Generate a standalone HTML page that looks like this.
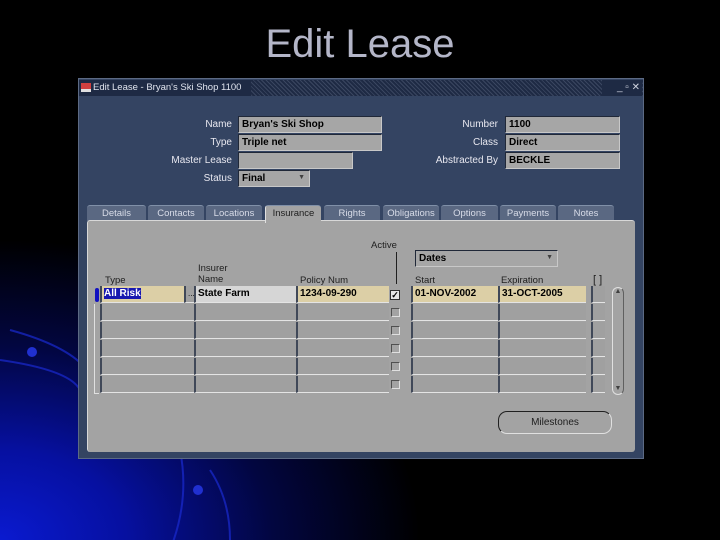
<!DOCTYPE html>
<html><head><meta charset="utf-8"><style>
*{margin:0;padding:0;box-sizing:border-box}
body{width:720px;height:540px;overflow:hidden;position:relative;font-family:"Liberation Sans",sans-serif;
background:radial-gradient(ellipse 420px 300px at 0px 540px,#0a1ad0 0%,#0610a0 30%,#020640 65%,#000 100%),#000;}
.a{position:absolute}
.t{font-size:10px;color:#101010;white-space:nowrap}
.lb{position:absolute;font-size:10px;color:#e8e8f0;text-align:right;white-space:nowrap}
.f{position:absolute;height:17px;background:#a6a6a6;border:1px solid #c8c8c8;border-left-color:#202838;border-top-color:#202838;font-size:10px;font-weight:bold;color:#000;padding:1px 3px;line-height:14px}
.tab{position:absolute;top:205px;height:16px;background:#5a6882;color:#d8dce8;font-size:9.5px;text-align:center;line-height:16px;border-top:1px solid #8090a8;border-radius:3px 3px 0 0}
.c{position:absolute;height:17px;background:#a0a0a0;border-left:2px solid #404858;border-bottom:1px solid #e4e4e4;font-size:10px;font-weight:bold;padding:1px 2px;line-height:14px}
.cb{position:absolute;width:9px;height:9px;border:1px solid #505050;border-right-color:#e0e0e0;border-bottom-color:#e0e0e0;left:391px}
.h{position:absolute;font-size:9.5px;color:#202020;white-space:nowrap}
</style></head><body>
<div class="a" style="left:0;top:22px;width:720px;text-align:center;font-size:40px;color:#b4b6c8">Edit Lease</div>
<svg class="a" style="left:0;top:300px" width="360" height="240"><g fill="none" stroke="#1a2ad0" stroke-width="2" opacity=".7"><path d="M10 30 Q120 60 90 120"/><path d="M0 60 Q70 70 80 90"/><path d="M170 250 Q190 200 180 150"/><path d="M230 240 Q230 200 210 170"/></g><circle cx="32" cy="52" r="5" fill="#2030d0"/><circle cx="198" cy="190" r="5" fill="#2030d0"/></svg>
<div class="a" style="left:78px;top:78px;width:566px;height:381px;background:#344462;border:1px solid #5c6a84"></div>
<div class="a" style="left:79px;top:80px;width:564px;height:16px;background:#1e2a44;background-image:repeating-linear-gradient(45deg,#1e2a44 0 2px,#3a4660 2px 3px)"></div>
<div class="a" style="left:79px;top:80px;width:172px;height:16px;background:#1e2a44"></div>
<div class="a" style="left:81px;top:83px;width:10px;height:9px;background:#d04040;border-bottom:3px solid #e0e0e0"></div>
<div class="a" style="left:93px;top:82px;font-size:9.5px;color:#e0e4ee">Edit Lease - Bryan's Ski Shop 1100</div>
<div class="a" style="left:602px;top:80px;width:40px;height:16px;background:#1e2a44;color:#d0d4e0;font-size:10px;text-align:right;padding-right:2px;line-height:16px">_ ▫ ✕</div>

<div class="lb" style="right:488px;top:119px">Name</div>
<div class="lb" style="right:488px;top:137px">Type</div>
<div class="lb" style="right:488px;top:155px">Master Lease</div>
<div class="lb" style="right:488px;top:173px">Status</div>
<div class="f" style="left:238px;top:116px;width:144px">Bryan's Ski Shop</div>
<div class="f" style="left:238px;top:134px;width:144px">Triple net</div>
<div class="f" style="left:238px;top:152px;width:115px"></div>
<div class="f" style="left:238px;top:170px;width:72px">Final<span style="position:absolute;right:4px;top:0;font-size:7px;color:#404040">▼</span></div>
<div class="lb" style="right:222px;top:119px">Number</div>
<div class="lb" style="right:222px;top:137px">Class</div>
<div class="lb" style="right:222px;top:155px">Abstracted By</div>
<div class="f" style="left:505px;top:116px;width:115px">1100</div>
<div class="f" style="left:505px;top:134px;width:115px">Direct</div>
<div class="f" style="left:505px;top:152px;width:115px">BECKLE</div>

<div class="tab" style="left:87px;width:59px">Details</div>
<div class="tab" style="left:148px;width:56px">Contacts</div>
<div class="tab" style="left:206px;width:56px">Locations</div>
<div class="tab" style="left:324px;width:56px">Rights</div>
<div class="tab" style="left:383px;width:56px">Obligations</div>
<div class="tab" style="left:441px;width:57px">Options</div>
<div class="tab" style="left:500px;width:56px">Payments</div>
<div class="tab" style="left:558px;width:56px">Notes</div>
<div class="a" style="left:87px;top:220px;width:548px;height:232px;background:#a3a3a3;border-top:1px solid #d8d8d8;border-left:1px solid #d8d8d8;border-radius:3px"></div>
<div class="tab" style="left:265px;width:56px;background:#a3a3a3;color:#202020;height:18px;border-left:1px solid #e0e0e0">Insurance</div>

<div class="h" style="left:371px;top:240px">Active</div>
<div class="a" style="left:396px;top:252px;width:1px;height:32px;background:#202020"></div>
<div class="f" style="left:415px;top:250px;width:143px;height:17px">Dates<span style="position:absolute;right:4px;top:0;font-size:7px;color:#404040">▼</span></div>
<div class="h" style="left:105px;top:275px">Type</div>
<div class="h" style="left:198px;top:263px;line-height:11px">Insurer<br>Name</div>
<div class="h" style="left:300px;top:275px">Policy Num</div>
<div class="h" style="left:415px;top:275px">Start</div>
<div class="h" style="left:501px;top:275px">Expiration</div>
<div class="h" style="left:593px;top:274px;font-size:11px">[ ]</div>

<div class="a" style="left:95px;top:288px;width:4px;height:14px;background:#1010c0;border-radius:2px"></div>
<div class="c" style="left:100px;top:286px;width:84px;background:#dccfa6"><span style="background:#1818b0;color:#fff">All Risk</span></div>
<div class="c" style="left:184px;top:286px;width:10px;font-weight:normal;font-size:8px">...</div>
<div class="c" style="left:194px;top:286px;width:102px;background:#d6d6d6">State Farm</div>
<div class="c" style="left:296px;top:286px;width:93px;background:#dccfa6">1234-09-290</div>
<div class="c" style="left:411px;top:286px;width:87px;background:#dccfa6">01-NOV-2002</div>
<div class="c" style="left:498px;top:286px;width:88px;background:#dccfa6">31-OCT-2005</div>
<div class="c" style="left:591px;top:286px;width:14px"></div>
<div class="a" style="left:390px;top:290px;width:10px;height:10px;background:#e8e8e8;border:1px solid #303030;font-size:9px;line-height:8px;text-align:center;font-weight:bold">✓</div>

<div class="c" style="left:100px;top:304px;width:94px"></div><div class="c" style="left:194px;top:304px;width:102px"></div><div class="c" style="left:296px;top:304px;width:93px"></div><div class="c" style="left:411px;top:304px;width:87px"></div><div class="c" style="left:498px;top:304px;width:88px"></div><div class="c" style="left:591px;top:304px;width:14px"></div><div class="cb" style="top:308px"></div>
<div class="c" style="left:100px;top:322px;width:94px"></div><div class="c" style="left:194px;top:322px;width:102px"></div><div class="c" style="left:296px;top:322px;width:93px"></div><div class="c" style="left:411px;top:322px;width:87px"></div><div class="c" style="left:498px;top:322px;width:88px"></div><div class="c" style="left:591px;top:322px;width:14px"></div><div class="cb" style="top:326px"></div>
<div class="c" style="left:100px;top:340px;width:94px"></div><div class="c" style="left:194px;top:340px;width:102px"></div><div class="c" style="left:296px;top:340px;width:93px"></div><div class="c" style="left:411px;top:340px;width:87px"></div><div class="c" style="left:498px;top:340px;width:88px"></div><div class="c" style="left:591px;top:340px;width:14px"></div><div class="cb" style="top:344px"></div>
<div class="c" style="left:100px;top:358px;width:94px"></div><div class="c" style="left:194px;top:358px;width:102px"></div><div class="c" style="left:296px;top:358px;width:93px"></div><div class="c" style="left:411px;top:358px;width:87px"></div><div class="c" style="left:498px;top:358px;width:88px"></div><div class="c" style="left:591px;top:358px;width:14px"></div><div class="cb" style="top:362px"></div>
<div class="c" style="left:100px;top:376px;width:94px"></div><div class="c" style="left:194px;top:376px;width:102px"></div><div class="c" style="left:296px;top:376px;width:93px"></div><div class="c" style="left:411px;top:376px;width:87px"></div><div class="c" style="left:498px;top:376px;width:88px"></div><div class="c" style="left:591px;top:376px;width:14px"></div><div class="cb" style="top:380px"></div>
<div class="a" style="left:94px;top:304px;width:5px;height:90px;border-left:1px solid #e0e0e0;border-bottom:1px solid #e0e0e0"></div>

<div class="a" style="left:612px;top:287px;width:12px;height:108px;border:1px solid #e0e0e0;border-right-color:#606060;border-radius:6px;font-size:7px;text-align:center;color:#404040">▲<div style="position:absolute;bottom:2px;width:100%">▼</div></div>

<div class="a" style="left:498px;top:411px;width:114px;height:23px;border:1px solid #202020;border-right-color:#e0e0e0;border-bottom-color:#e0e0e0;border-radius:9px;font-size:10px;text-align:center;line-height:21px;color:#202020">Milestones</div>
</body></html>
